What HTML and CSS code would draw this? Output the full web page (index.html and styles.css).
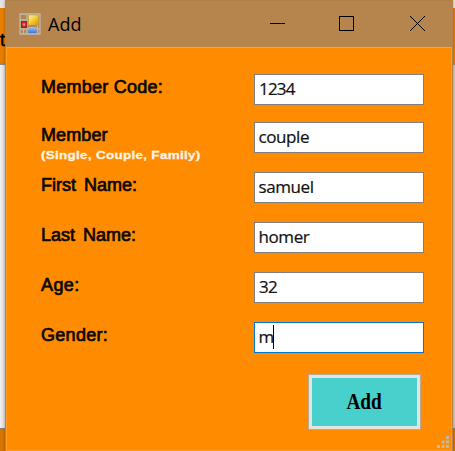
FILE: index.html
```html
<!DOCTYPE html>
<html lang="en">
<head>
<meta charset="utf-8">
<title>Add</title>
<link rel="stylesheet" href="styles.css">
</head>
<body>
<div class="backdrop"><div class="band top">t</div><div class="gap"></div><div class="band bottom"></div></div>
<main class="window">
  <header class="titlebar">
    <svg class="app-icon" width="22" height="22" viewBox="0 0 22 22">
      <defs>
        <linearGradient id="gold" x2="1" y2="1"><stop stop-color="#fff3a0"/><stop offset=".5" stop-color="#f5cb35"/><stop offset="1" stop-color="#c79508"/></linearGradient>
        <linearGradient id="blue" x2="0" y2="1"><stop stop-color="#9cc4ff"/><stop offset="1" stop-color="#3e73dc"/></linearGradient>
        <radialGradient id="red"><stop stop-color="#ffb4a6"/><stop offset=".5" stop-color="#c93a2d"/><stop offset="1" stop-color="#a51c17"/></radialGradient>
      </defs>
      <path d="M1 1H21V21H1ZM8 1V21M1 7H8M1 16H21M4.500 16V21M18.500 12V21" fill="none" stroke="#bdb9b3" stroke-width="1.300"/>
      <rect x="9.500" y="2" width="10" height="10" fill="url(#gold)" stroke="#c8a13b" stroke-width=".6"/>
      <rect x="2" y="8" width="6" height="7" fill="url(#red)"/>
      <rect x="9.500" y="14" width="8" height="6" fill="url(#blue)"/>
    </svg>
    <h1>Add</h1>
    <svg class="controls" width="156" height="16" viewBox="0 0 156 16" fill="none" stroke="#000" stroke-width="1">
      <path d="M0 7.500H15"/><rect x="69.500" y=".5" width="14" height="14"/><path d="M140 0L155 15M155 0L140 15"/>
    </svg>
  </header>
  <form class="form">
    <div class="row"><label class="l-code">Member Code:</label><div class="field">1234</div></div>
    <div class="row"><label class="l-member">Member<small>(Single, Couple, Family)</small></label><div class="field text">couple</div></div>
    <div class="row"><label class="l-name">First Name:</label><div class="field text">samuel</div></div>
    <div class="row"><label class="l-name">Last Name:</label><div class="field text">homer</div></div>
    <div class="row"><label class="l-age">Age:</label><div class="field">32</div></div>
    <div class="row"><label class="l-gender">Gender:</label><div class="field text focused">m<i class="caret"></i></div></div>
    <button class="add" type="button"><span>Add</span></button>
  </form>
  <svg class="grip" width="13" height="13" viewBox="0 0 13 13" fill="#c9b7a0"><path d="M9 0h3v3h-3zM4.500 4.500h3v3h-3zM9 4.500h3v3h-3zM0 9h3v3h-3zM4.500 9h3v3h-3zM9 9h3v3h-3z"/></svg>
</main>
</body>
</html>
```
FILE: styles.css
```css
* { box-sizing: border-box; }
body {
  margin: 0;
  width: 455px;
  height: 451px;
  overflow: hidden;
  position: relative;
  padding-left: 5px;
  font-family: "Liberation Sans", Arial, sans-serif;
}
.backdrop {
  position: absolute;
  inset: 0;
  display: flex;
  flex-direction: column;
  padding-top: 8px;
  background: #e4e4e4;
}
.band { background: #e87e00; }
.band.top {
  height: 57px;
  border-bottom: 2px solid #8a8a8a;
  font: 18px/64px "Liberation Sans", Arial, sans-serif;
  -webkit-text-stroke: .5px #000;
}
.gap { height: 363px; background: linear-gradient(90deg, #eee, #dcdcdc 5px, #c9c9c9); }
.band.bottom { flex: 1; border-top: 2px solid #808080; background: #d77500; }
.window {
  position: relative;
  width: 448px;
  height: 451px;
  background: #ff8c00;
  border: solid #b9804a;
  border-width: 0 1px;
  box-shadow: 0 0 3px rgba(0, 0, 0, .3), inset 1px 0 #ff9d28, inset -1px 0 #ff9d28, inset 0 -1px #ff9d28;
}
.titlebar {
  height: 48px;
  display: flex;
  align-items: center;
  padding-left: 13px;
  background: #b5854d;
  border-top: 1px solid #ad7f4b;
  border-bottom: 1px solid #ffa23a;
}
.titlebar h1 {
  margin: 0 0 0 7px;
  width: 35px;
  font: 400 18px/24px "Open Sans", "Noto Sans", sans-serif;
}
.controls { margin-left: 187px; flex: none; }
.app-icon { flex: none; }
.form {
  display: grid;
  grid-template-rows: 48px repeat(4, 50px) 53px 55px;
  padding: 26px 29px 0 35px;
}
.row { display: flex; justify-content: space-between; align-items: flex-start; }
label {
  padding-top: 3px;
  font-size: 18px;
  line-height: 21px;
  color: #0b0700;
  white-space: nowrap;
  -webkit-text-stroke: .7px #0b0700;
}
.l-code { letter-spacing: .25px; }
.l-member { letter-spacing: .1px; }
.l-name { word-spacing: 3px; }
.l-age { letter-spacing: .4px; }
.l-gender { letter-spacing: .3px; }
label small {
  display: block;
  margin-top: 2px;
  font-size: 11.5px;
  line-height: 15px;
  font-weight: 700;
  letter-spacing: .25px;
  color: #fff4e6;
  -webkit-text-stroke: .3px #fff4e6;
  transform: scaleX(1.17);
  transform-origin: 0 0;
  width: 130px;
}
.field {
  display: flex;
  align-items: center;
  width: 170px;
  height: 31px;
  margin-right: -1px;
  padding: 0 0 1px 4px;
  background: #fff;
  border: 1px solid #808080;
  font: 17px/24px "Open Sans", "Noto Sans", sans-serif;
  letter-spacing: -.8px;
  color: #111;
  -webkit-text-stroke: .2px #111;
}
.field.text { padding-left: 3.5px; letter-spacing: -.4px; }
.field.focused { border-color: #0078d7; }
.caret { width: 1px; height: 24px; margin-left: -.5px; background: #000; }
.add {
  justify-self: end;
  width: 113px;
  height: 56px;
  margin: -1px 2px 0 0;
  padding: 0;
  background: #48d1cc;
  border: 4px solid #e3e3e3;
  outline: 1px solid #b8a995;
  outline-offset: -1px;
  color: #000;
  font: 700 23px/28px "Liberation Serif", "Times New Roman", serif;
}
.add span { display: inline-block; transform: scaleX(.84); }
.grip { position: absolute; right: 2px; bottom: 2px; }
```
